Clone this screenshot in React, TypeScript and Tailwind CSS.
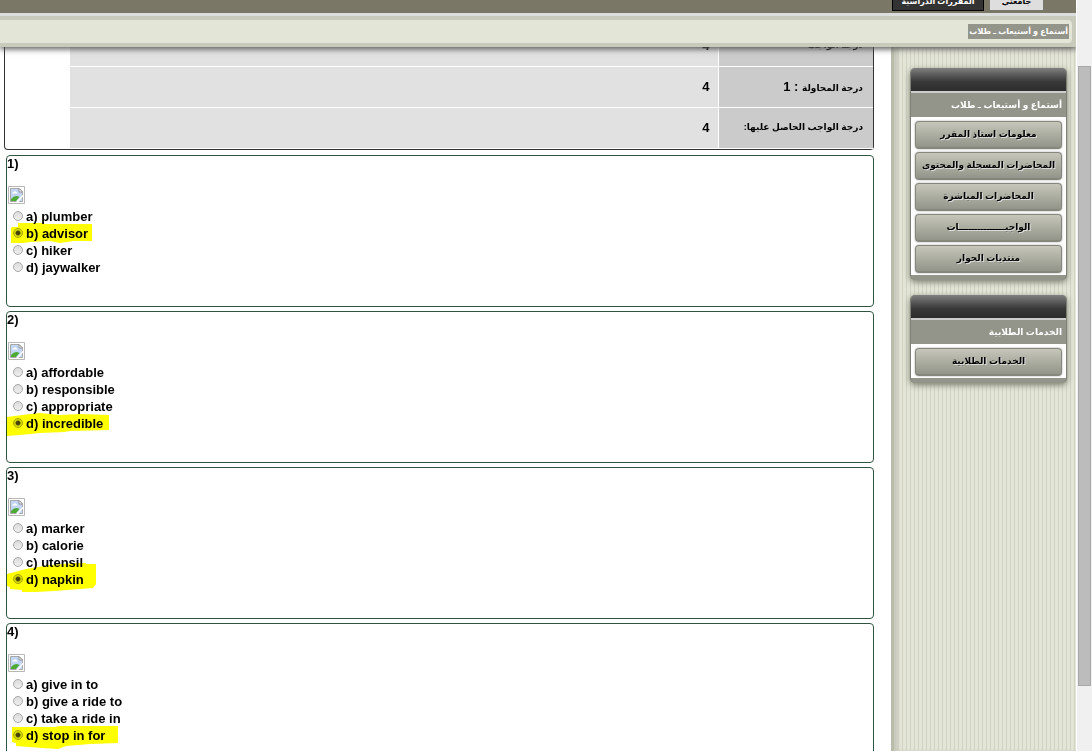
type Question = {
  id: number
  options: string[]
  answer: number
  marker: string
}

const questions: Question[] = [
  {
    id: 1,
    options: ['a) plumber', 'b) advisor', 'c) hiker', 'd) jaywalker'],
    answer: 1,
    marker: 'M12 4 H18 V0 H42 L44 1 H92 V18 H74 L60 20 L50 18 L30 19 L24 20 H11 V5 Z',
  },
  {
    id: 2,
    options: ['a) affordable', 'b) responsible', 'c) appropriate', 'd) incredible'],
    answer: 3,
    marker: 'M7 4 L22 2 L40 0 L60 2 L80 1 L109 2 V17 L70 18 L64 19 L40 20 L20 22 L6 23 Z',
  },
  {
    id: 3,
    options: ['a) marker', 'b) calorie', 'c) utensil', 'd) napkin'],
    answer: 3,
    marker: 'M7 5 L26 0 L50 -4 L76 -6 H86 V-5 H96 V15 L93 19 L80 20 L54 22 L36 23 H22 V21 L10 20 V18 L7 17 Z',
  },
  {
    id: 4,
    options: ['a) give in to', 'b) give a ride to', 'c) take a ride in', 'd) stop in for'],
    answer: 3,
    marker: 'M12 2 L54 2 L60 1 H118 V18 L90 19 L66 21 L58 24 L42 23 L16 21 V18 L12 17 Z',
  },
]

const grades = [
  { label: 'درجة الواجب', attempt: '', value: '4' },
  { label: 'درجة المحاولة', attempt: ' : 1', value: '4' },
  { label: 'درجة الواجب الحاصل عليها:', attempt: '', value: '4' },
]

const panels = [
  {
    title: 'أستماع و أستيعاب ـ طلاب',
    links: [
      'معلومات استاذ المقرر',
      'المحاضرات المسجلة والمحتوى',
      'المحاضرات المباشرة',
      'الواجبـــــــــــــــات',
      'منتديات الحوار',
    ],
  },
  { title: 'الخدمات الطلابية', links: ['الخدمات الطلابية'] },
]

function MissingImage() {
  return (
    <svg width="17" height="18" viewBox="0 0 17 18" className="block" role="img" aria-label="image">
      <path d="M.5 .5H16.5V17.5H.5Z" fill="#fff" stroke="#b8b8b8" />
      <path d="M2.5 2.5H11L14.5 6V15.5H2.5Z" fill="#c3d5f5" stroke="#a8a8a8" />
      <path d="M11 2.5V6H14.5Z" fill="#fff" stroke="#909090" />
      <path d="M4 7.5Q4 6 6 6Q7 4 8 6Q9.5 6 9.5 7.5Z" fill="#fff" />
      <path d="M3 15V13Q7 8.5 11.5 11L8 15Z" fill="#4caa35" />
      <path d="M8 16L15 8.5V10.5L10.5 16Z" fill="#fff" />
    </svg>
  )
}

function QuestionBox({ question }: { question: Question }) {
  return (
    <fieldset className="h-38 rounded border border-[#2f5540] bg-white text-[13px] leading-[17px] font-bold">
      <div className="leading-[15px]">{question.id})</div>
      <div className="mt-[15px] mb-1 pl-px">
        <MissingImage />
      </div>
      {question.options.map((option, i) => (
        <label key={option} className="relative flex items-center">
          <input
            type="radio"
            name={`question-${question.id}`}
            defaultChecked={i === question.answer}
            className="mr-[3px] mb-px ml-1.5 size-[10px] appearance-none rounded-full border border-[#a8a8a8] bg-linear-to-b from-[#dcdcdc] to-[#eeeeee] checked:bg-[radial-gradient(closest-side,#444_45%,#d8d8d8_75%)]"
          />
          {option}
          {i === question.answer && (
            <svg
              className="pointer-events-none absolute -top-0.5 left-[-7px] overflow-visible mix-blend-multiply"
              width="125"
              height="24"
              aria-hidden="true"
            >
              <path d={question.marker} fill="#ff0" />
            </svg>
          )}
        </label>
      ))}
    </fieldset>
  )
}

function SidePanel({ title, links }: { title: string; links: string[] }) {
  return (
    <section className="overflow-hidden rounded-[5px] border-x border-[#808077] bg-[#94958a] shadow-[0_2px_6px_#777a6c]">
      <div className="h-[23px] bg-linear-to-b from-[#808080] via-[#383838] via-60% to-[#2d2d2d]" />
      <h2 className="h-[26px] border-t-2 border-[#ccc] px-1 text-[9px] leading-6 font-bold text-white">
        {title}
      </h2>
      <nav className="flex flex-col gap-[3px] bg-white px-1 pt-1 pb-0.5">
        {links.map(link => (
          <a
            key={link}
            href="#"
            className="h-7 rounded border border-b-2 border-[#85867c] bg-linear-to-b from-[#c6c7ba] to-[#94958a] text-center text-[9px] leading-6 font-bold whitespace-nowrap text-black shadow-[0_0_2px_#999] [text-shadow:1px_1px_0_#ddd]"
          >
            {link}
          </a>
        ))}
      </nav>
      <div className="h-[5px]" />
    </section>
  )
}

export default function App() {
  return (
    <div className="flex min-h-screen bg-white font-['Liberation_Sans','DejaVu_Sans',sans-serif] text-black">
      <div className="mb-0.5 flex min-w-0 flex-1 flex-col">
        <header className="relative z-10 shadow-[0_2px_6px_#555]">
          <div
            dir="rtl"
            className="flex h-4 items-start gap-[5px] overflow-hidden border-b-3 border-[#dcdddd] bg-[#7a7767] pr-8 text-[8px] leading-[17px] font-bold whitespace-nowrap"
          >
            <a href="#" className="-mt-2 h-[19px] w-[55px] border border-[#77776d] bg-[#dedede] text-center">
              جامعتي
            </a>
            <a href="#" className="-mt-2 h-[19px] w-[92px] border border-black bg-[#333] text-center text-white">
              المقررات الدراسية
            </a>
          </div>
          <div className="bg-[#c8cabc] py-1 pr-1">
            <div dir="rtl" className="flex h-[23px] items-center rounded-r bg-[#e3e5d7] px-[3px]">
              <span className="bg-[#94958a] px-px text-[8px] leading-[15px] font-bold text-white">
                أستماع و أستيعاب ـ طلاب
              </span>
            </div>
          </div>
        </header>

        <div className="flex flex-1">
          <main className="-mt-[22px] min-w-0 flex-1">
            {/* Grade summary, its first row scrolled under the header */}
            <div dir="rtl" className="mr-[17px] ml-1 rounded-b border border-t-0 border-[#333] pl-[65px]">
              <table className="w-full border-collapse text-[9px] font-bold">
                <tbody>
                  {grades.map(grade => (
                    <tr key={grade.label} className="h-[41px] border-b border-white">
                      <th className="w-[155px] border-l border-white bg-[#cbcbcb] pr-2.5 text-right">
                        {grade.label}
                        {grade.attempt && <span className="text-[13px]">{grade.attempt}</span>}
                      </th>
                      <td className="bg-[#e1e1e1] pr-2 text-right text-[13px]">{grade.value}</td>
                    </tr>
                  ))}
                </tbody>
              </table>
            </div>
            <div className="mt-[5px] mr-[17px] ml-1.5 h-[596px] space-y-1 overflow-hidden">
              {questions.map(question => (
                <QuestionBox key={question.id} question={question} />
              ))}
            </div>
          </main>

          <aside
            dir="rtl"
            className="flex w-[185px] flex-col gap-[15px] border-l-3 border-[#b9bbab] bg-[#e3e5d7] bg-[repeating-linear-gradient(90deg,#d1d3c3_0_1px,#e3e5d7_1px_4px)] pt-[21px] pr-[9px] pl-4 shadow-[inset_4px_0_3px_#c8cabc]"
          >
            {panels.map(panel => (
              <SidePanel key={panel.title} title={panel.title} links={panel.links} />
            ))}
          </aside>
        </div>
      </div>

      {/* Page scrollbar */}
      <div className="relative z-20 w-4 shrink-0 border-b-2 border-l border-white bg-[#f0f0f0] px-px pt-[66px]">
        <div className="h-[620px] border border-[#a8a8a8] bg-[#bcbcbc]" />
      </div>
    </div>
  )
}
